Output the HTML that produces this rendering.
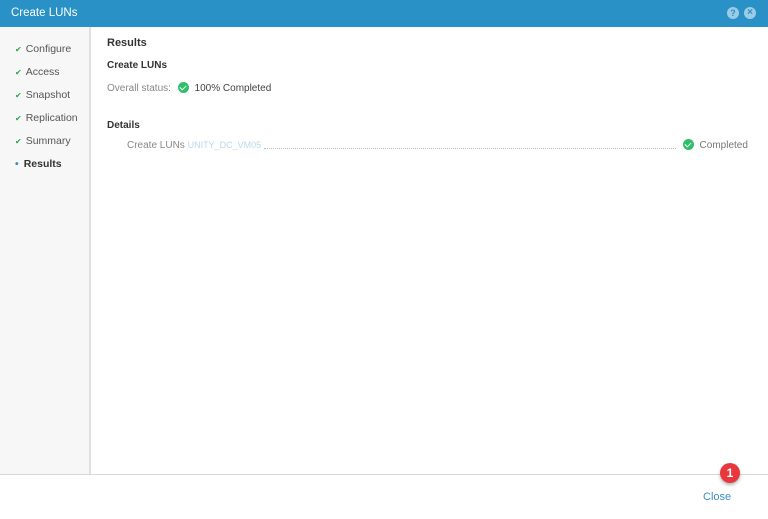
<!DOCTYPE html>
<html><head><style>
*{margin:0;padding:0;box-sizing:border-box}
body{width:768px;height:519px;background:#fff;font-family:"Liberation Sans",sans-serif;font-size:10px;position:relative;overflow:hidden}
.hdr{position:absolute;left:0;top:0;width:768px;height:27px;background:#2a91c6;color:#fff;font-size:11.5px;line-height:27px;padding-left:11px}
.side{position:absolute;left:0;top:27px;width:91px;height:448px;background:#f7f7f7;border-right:2px solid #e0e0e0}
.side div{position:absolute;left:15px;color:#555;font-size:10.5px}
.side span.c{color:#2aa84a;font-size:8px;margin-right:4px}
.main{position:absolute;left:91px;top:27px;width:674px;height:448px;border-right:1px solid #ddd}
.foot{position:absolute;left:0;top:474px;width:768px;height:45px;border-top:1px solid #d8d8d8;background:#fff}
.t{position:absolute;color:#333;font-weight:bold}
.g{position:absolute;color:#888}
.ok{display:inline-block;width:11px;height:11px;border-radius:50%;background:#2fbf6a;vertical-align:-2px;position:relative}
.ok:after{content:"";position:absolute;left:3px;top:2px;width:3px;height:5px;border:solid #fff;border-width:0 1.5px 1.5px 0;transform:rotate(45deg)}
</style></head><body>
<div class="hdr">Create LUNs</div>
<div style="position:absolute;left:727px;top:7px;width:12px;height:12px;border-radius:50%;background:#9ccbe6;color:#2a91c6;font-size:9px;font-weight:bold;text-align:center;line-height:12px">?</div>
<div style="position:absolute;left:744px;top:7px;width:12px;height:12px;border-radius:50%;background:#9ccbe6;color:#2a91c6;font-size:10px;font-weight:bold;text-align:center;line-height:12px">×</div>
<div class="side">
<div style="top:16px"><span class="c">✔</span>Configure</div>
<div style="top:39px"><span class="c">✔</span>Access</div>
<div style="top:62px"><span class="c">✔</span>Snapshot</div>
<div style="top:85px"><span class="c">✔</span>Replication</div>
<div style="top:108px"><span class="c">✔</span>Summary</div>
<div style="top:131px;color:#333;font-weight:bold"><span style="color:#2a91c6;margin-right:5px">•</span>Results</div>
</div>
<div class="t" style="left:107px;top:37px;font-size:11px">Results</div>
<div class="t" style="left:107px;top:60px">Create LUNs</div>
<div class="g" style="left:107px;top:83px">Overall status:</div>
<div style="position:absolute;left:178px;top:82px;color:#444"><span class="ok"></span>&nbsp; 100% Completed</div>
<div class="t" style="left:107px;top:120px">Details</div>
<div class="g" style="left:127px;top:140px">Create LUNs <span style="color:#b8d8ef;font-size:9px">UNITY_DC_VM05</span></div>
<div style="position:absolute;left:264px;top:148px;width:412px;border-top:1px dotted #bbb"></div>
<div style="position:absolute;left:683px;top:139px;color:#777"><span class="ok"></span>&nbsp; Completed</div>
<div class="foot"></div>
<div style="position:absolute;left:720px;top:463px;width:20px;height:20px;border-radius:50%;background:#e8383d;color:#fff;font-weight:bold;font-size:12px;text-align:center;line-height:20px;box-shadow:0 2px 3px rgba(0,0,0,.3)">1</div>
<div style="position:absolute;left:703px;top:491px;color:#3a8fc4;font-size:11px">Close</div>
</body></html>
